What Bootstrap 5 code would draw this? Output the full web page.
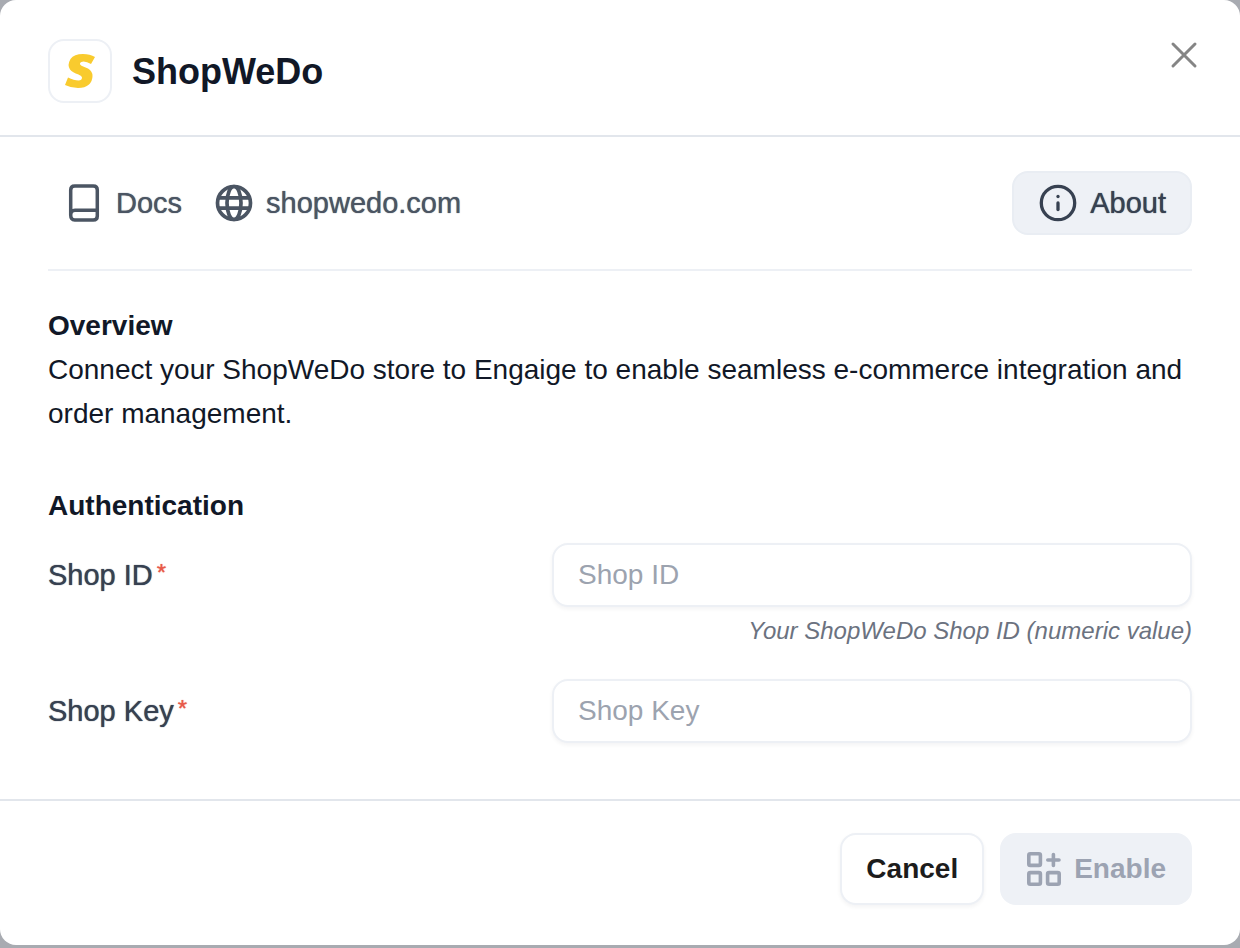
<!DOCTYPE html>
<html lang="en">
<head>
<meta charset="utf-8">
<meta name="viewport" content="width=device-width, initial-scale=1">
<title>ShopWeDo integration</title>
<link href="https://cdn.jsdelivr.net/npm/bootstrap@5.3.0/dist/css/bootstrap.min.css" rel="stylesheet">
<style>
  body { background: #a8abb1; color: #111827; font-family: "Liberation Sans", Arial, sans-serif; font-size: 28px; line-height: 44px; }
  .dialog-panel { border-radius: 16px; padding-bottom: 40px; }
  .dialog-head { padding: 39px 40px 32px 48px; border-bottom: 2px solid #e2e6ec; }
  .app-logo { width: 64px; height: 64px; border: 2px solid #edf0f5; border-radius: 16px; }
  .app-title { font-size: 36px; line-height: 44px; padding-top: 2px; }
  .close-btn { width: 32px; height: 32px; color: #858585; }
  .dialog-main { padding: 34px 48px 56px; }
  .tool-row { padding-bottom: 34px; border-bottom: 2px solid #edf0f5; }
  .tool-links { gap: 32px; padding-left: 20px; }
  .tool-link { gap: 12px; color: #4b5563; font-size: 29px; }
  .mid-weight { text-shadow: 0 0 1px currentColor; }
  .ui-btn { --bs-btn-font-size: 28px; --bs-btn-line-height: 44px; --bs-btn-border-radius: 16px; --bs-btn-border-width: 2px; --bs-btn-padding-x: 24px; }
  .about-btn { --bs-btn-font-size: 29px; --bs-btn-padding-y: 8px; --bs-btn-bg: #eef1f6; --bs-btn-color: #374151; --bs-btn-border-color: #e9edf3; --bs-btn-hover-bg: #e5e9f0; --bs-btn-hover-color: #374151; gap: 12px; }
  .cancel-btn { --bs-btn-bg: #fff; --bs-btn-color: #1c1c1c; --bs-btn-border-color: #edf0f5; --bs-btn-padding-y: 12px; --bs-btn-hover-bg: #f8f9fb; box-shadow: 0 2px 4px rgba(16,24,40,.05); }
  .enable-btn { --bs-btn-padding-y: 12px; --bs-btn-disabled-bg: #eef1f6; --bs-btn-disabled-color: #9ca3b2; --bs-btn-disabled-border-color: #eef1f6; --bs-btn-disabled-opacity: 1; gap: 12px; }
  .overview { padding-top: 33px; }
  .block-title { font-size: 28px; line-height: 44px; }
  .auth-title { margin-bottom: 15px; }
  .field-row { display: grid; grid-template-columns: 63fr 80fr; }
  .field-label { color: #374151; font-size: 29px; padding: 10px 0; }
  .req-star { color: #e8594a; margin-left: 4px; font-size: 24px; vertical-align: 4px; line-height: 1; }
  .field-box { height: 64px; padding: 8px 24px; font-size: 28px; border: 2px solid #edf0f5; border-radius: 16px; box-shadow: 0 2px 4px rgba(16,24,40,.05); }
  .field-box::placeholder { color: #9ca3af; }
  .field-hint { font-size: 24px; line-height: 32px; color: #6b7280; margin-top: 8px; }
  .dialog-foot { padding: 32px 48px 0; gap: 16px; border-top: 2px solid #e2e6ec; }
</style>
</head>
<body>
<main class="dialog-panel bg-white" role="dialog" aria-labelledby="dialogTitle">
  <header class="dialog-head d-flex align-items-start justify-content-between">
    <div class="d-flex align-items-center">
      <div class="app-logo d-flex align-items-center justify-content-center">
        <svg width="32" height="36" viewBox="0 0 32 36" aria-hidden="true"><path fill="#f9cb2e" d="M31 4Q26 1 19 1Q10 1 6.500 6Q3 12 6 16.500Q8.500 19.500 14.500 21.500Q18 23 18 24.500Q18 27.500 14.500 27.500Q10 27.500 4 24.500L1 32Q7 35 14 35Q21 35 25 31.500Q28.500 28 28.500 23Q28.500 18 24 15.500Q20 14 17.500 12.800Q15.500 11.500 16 10Q17 8.500 19.500 8.500Q23 8.500 27 11Z"/></svg>
      </div>
      <h1 class="app-title fw-bold mb-0 ms-3 ps-1" id="dialogTitle">ShopWeDo</h1>
    </div>
    <button type="button" class="close-btn btn p-0 border-0 d-flex" aria-label="Close">
      <svg width="32" height="32" viewBox="0 0 32 32" fill="none" stroke="currentColor" stroke-width="3" stroke-linecap="round" aria-hidden="true"><path d="M5 5L27 27M27 5L5 27"/></svg>
    </button>
  </header>

  <div class="dialog-main">
    <div class="tool-row d-flex align-items-center justify-content-between">
      <nav class="tool-links d-flex" aria-label="Resources">
        <a class="tool-link mid-weight d-flex align-items-center text-decoration-none" href="#docs">
          <svg class="me-1" width="32" height="40" viewBox="0 0 32 40" fill="none" stroke="currentColor" stroke-width="3.500" stroke-linejoin="round" aria-hidden="true"><path d="M2.700 32V7Q2.700 3 6.700 3H25.300Q29.300 3 29.300 7V33Q29.300 37 25.300 37H6.700Q2.700 37 2.700 32Q2.700 27.200 7 27.200H29.300"/></svg>
          Docs
        </a>
        <a class="tool-link mid-weight d-flex align-items-center text-decoration-none" href="#site">
          <svg width="40" height="40" viewBox="0 0 40 40" fill="none" stroke="currentColor" stroke-width="3.700" aria-hidden="true"><circle cx="20" cy="20" r="16.500"/><ellipse cx="20" cy="20" rx="7" ry="16.500"/><path d="M4 14.800H36M4 25.200H36"/></svg>
          shopwedo.com
        </a>
      </nav>
      <button type="button" class="btn ui-btn about-btn mid-weight d-flex align-items-center">
        <svg width="40" height="40" viewBox="0 0 40 40" fill="none" stroke="currentColor" stroke-width="3.300" stroke-linecap="round" aria-hidden="true"><circle cx="20" cy="20" r="16.700"/><path d="M20 20V26.500"/><path d="M20 13.500V13.600"/></svg>
        About
      </button>
    </div>

    <section class="overview">
      <h2 class="block-title fw-bold mb-0">Overview</h2>
      <p class="mb-0">Connect your ShopWeDo store to Engaige to enable seamless e-commerce integration and order management.</p>
    </section>

    <form class="pt-5">
      <h2 class="block-title auth-title fw-bold">Authentication</h2>
      <div class="field-row mb-4 pb-2">
        <label class="field-label mid-weight" for="shopId">Shop ID<span class="req-star">*</span></label>
        <div>
          <input class="form-control field-box" type="text" id="shopId" placeholder="Shop ID" aria-describedby="shopIdHint">
          <div class="field-hint fst-italic text-end" id="shopIdHint">Your ShopWeDo Shop ID (numeric value)</div>
        </div>
      </div>
      <div class="field-row">
        <label class="field-label mid-weight" for="shopKey">Shop Key<span class="req-star">*</span></label>
        <input class="form-control field-box" type="text" id="shopKey" placeholder="Shop Key">
      </div>
    </form>
  </div>

  <footer class="dialog-foot d-flex justify-content-end">
    <button type="button" class="btn ui-btn cancel-btn fw-bold">Cancel</button>
    <button type="button" class="btn ui-btn enable-btn fw-bold d-flex align-items-center" disabled>
      <svg width="36" height="36" viewBox="0 0 36 36" fill="none" stroke="currentColor" stroke-width="3.600" stroke-linecap="round" aria-hidden="true"><rect x="2.800" y="2.800" width="11.600" height="11.600" rx="1.500"/><rect x="2.800" y="21.600" width="11.600" height="11.600" rx="1.500"/><rect x="21.600" y="21.600" width="11.600" height="11.600" rx="1.500"/><path d="M27.400 3.500V14.500M21.800 9H33"/></svg>
      Enable
    </button>
  </footer>
</main>
<script src="https://cdn.jsdelivr.net/npm/bootstrap@5.3.0/dist/js/bootstrap.bundle.min.js"></script>
</body>
</html>
